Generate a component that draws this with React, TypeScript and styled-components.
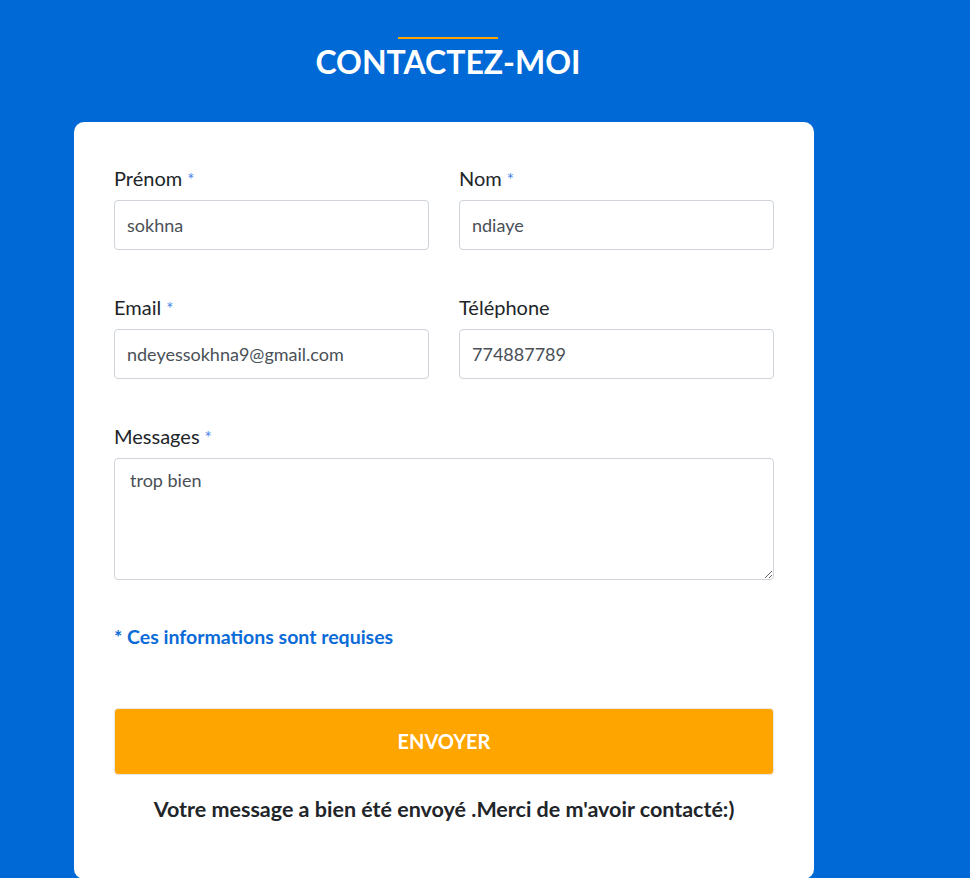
import * as React from 'react';
import styled, {createGlobalStyle} from 'styled-components';

const GlobalStyle = createGlobalStyle`
html, body {
    margin: 0;
    padding: 0;
    background: #0069d6;
    font-family: Lato, "Open Sans", Arial, sans-serif;
}
* {
    box-sizing: border-box;
}
`

const Page = styled.div`
min-height: 878px;
padding-top: 37px;
`

const Container = styled.div`
width: 740px;
margin-left: 74px;
`

const Header = styled.div`
display: flex;
flex-direction: column;
align-items: center;
padding-left: 8px;
margin-bottom: 41px;
`

const Accent = styled.div`
width: 100px;
height: 2px;
background: #ffa500;
`

const Title = styled.h2`
margin: 4px 0 0 0;
color: #fff;
font-size: 32px;
font-weight: 700;
line-height: 1.2;
`

const Card = styled.form`
background: #fff;
border-radius: 10px;
padding: 41px 40px 54px 40px;
`

const Row = styled.div`
display: grid;
grid-template-columns: 1fr 1fr;
column-gap: 30px;
margin-bottom: 42px;
`

const Field = styled.div`
display: flex;
flex-direction: column;
`

const Label = styled.label`
font-size: 20px;
line-height: 1.5;
color: #212529;
margin-bottom: 7px;
`

const Star = styled.span`
color: #4a85ec;
font-size: 17px;
margin-left: 5px;
`

const Input = styled.input`
height: 50px;
border: 1px solid #ced4da;
border-radius: 4px;
padding: 0 12px;
font-family: inherit;
font-size: 18px;
color: #495057;
background: #fff;
outline: none;
`

const TextArea = styled.textarea`
height: 122px;
border: 1px solid #ced4da;
border-radius: 4px;
padding: 8px 15px;
font-family: inherit;
font-size: 18px;
line-height: 1.5;
color: #495057;
resize: vertical;
outline: none;
`

const Required = styled.p`
margin: 42px 0 56px 0;
color: #0a6bd8;
font-size: 19.5px;
font-weight: 700;
line-height: 1.5;
`

const SendButton = styled.button`
width: 100%;
height: 67px;
background: #ffa500;
border: 1px solid #e8e8e8;
border-radius: 4px;
color: #fff;
font-family: inherit;
font-size: 20px;
font-weight: 700;
cursor: pointer;
`

const Success = styled.p`
margin: 18px 0 0 0;
text-align: center;
color: #212529;
font-size: 21.5px;
font-weight: 700;
line-height: 1.5;
`

export default function App() {
    return <>
        <GlobalStyle/>
        <Page>
            <Container>
                <Header>
                    <Accent/>
                    <Title>CONTACTEZ-MOI</Title>
                </Header>
                <Card onSubmit={e => e.preventDefault()}>
                    <Row>
                        <Field>
                            <Label>Prénom<Star>*</Star></Label>
                            <Input defaultValue="sokhna"/>
                        </Field>
                        <Field>
                            <Label>Nom<Star>*</Star></Label>
                            <Input defaultValue="ndiaye"/>
                        </Field>
                    </Row>
                    <Row>
                        <Field>
                            <Label>Email<Star>*</Star></Label>
                            <Input defaultValue="ndeyessokhna9@gmail.com"/>
                        </Field>
                        <Field>
                            <Label>Téléphone</Label>
                            <Input defaultValue="774887789"/>
                        </Field>
                    </Row>
                    <Field>
                        <Label>Messages<Star>*</Star></Label>
                        <TextArea defaultValue="trop bien"/>
                    </Field>
                    <Required>* Ces informations sont requises</Required>
                    <SendButton type="submit">ENVOYER</SendButton>
                    <Success>Votre message a bien été envoyé .Merci de m'avoir contacté:)</Success>
                </Card>
            </Container>
        </Page>
    </>
}
